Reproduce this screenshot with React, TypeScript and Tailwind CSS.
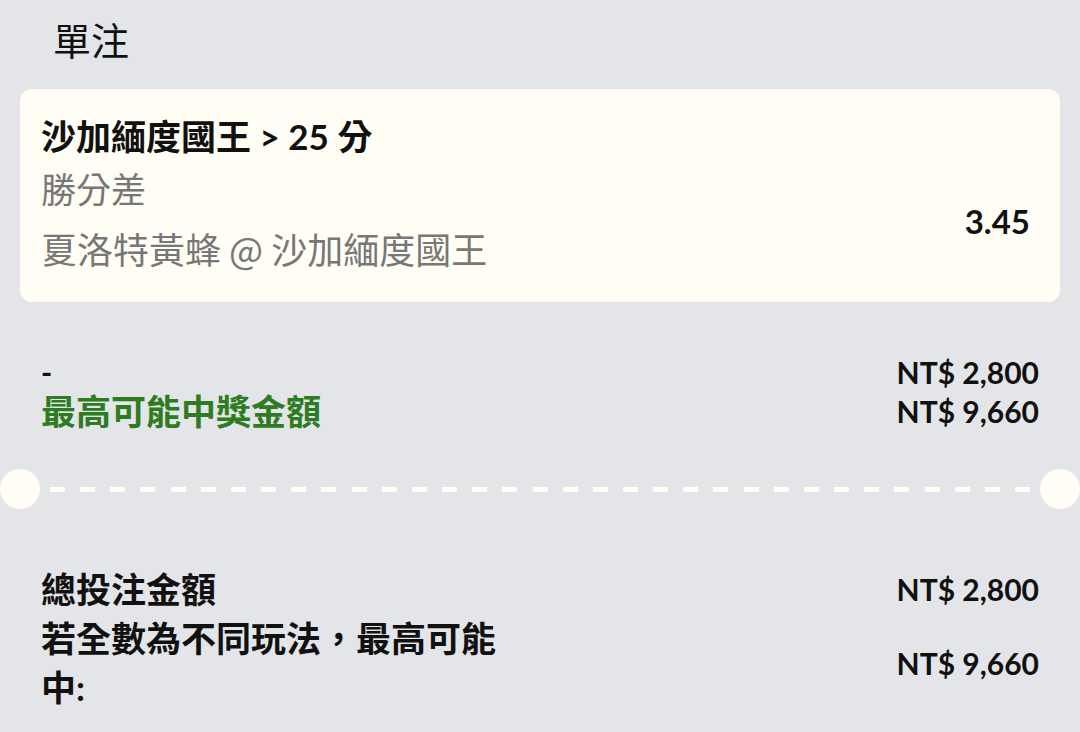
const dashes = Array.from({ length: 33 });

function Row({ left, right }: { left: React.ReactNode; right: React.ReactNode }) {
  return (
    <div className="flex items-center justify-between">
      {left}
      <span className="text-[30px] font-bold text-[#111]">{right}</span>
    </div>
  );
}

export default function App() {
  return (
    <div className="min-h-screen w-[1080px] bg-[#e4e5e8] font-[Lato,'Noto_Sans_CJK_TC',sans-serif] text-[#111]">
      {/* Header */}
      <div className="flex h-[89px] items-center pb-[9px] pl-[53px] text-[38px]">單注</div>

      {/* Selection card */}
      <div className="mx-[20px] flex items-start justify-between rounded-[12px] bg-[#fffdf4] pb-[24px] pl-[21px] pr-[30px] pt-[25px]">
        <div className="flex flex-col">
          <span className="text-[35px] font-bold leading-[44px]">沙加緬度國王 &gt; 25 分</span>
          <span className="font-['Noto_Sans_CJK_TC',sans-serif] text-[35px] leading-[60px] text-[#777]">勝分差</span>
          <span className="font-['Noto_Sans_CJK_TC',sans-serif] text-[36px] leading-[60px] text-[#777]">
            夏洛特黃蜂 @ 沙加緬度國王
          </span>
        </div>
        <span className="pt-[87px] text-[33px] font-bold leading-[40px]">3.45</span>
      </div>

      {/* Stake / potential win */}
      <div className="mt-[51px] px-[41px] leading-[39px]">
        <Row left={<span className="text-[30px] font-bold">-</span>} right="NT$ 2,800" />
        <Row
          left={<span className="text-[35px] font-bold text-[#2e7b22]">最高可能中獎金額</span>}
          right="NT$ 9,660"
        />
      </div>

      {/* Ticket divider */}
      <div className="mt-[38px] flex h-[40px] items-center">
        <div className="h-[40px] w-[40px] shrink-0 rounded-full bg-[#fffdf4]" />
        <div className="mx-[10px] flex flex-1 justify-between">
          {dashes.map((_, i) => (
            <div key={i} className="h-[5px] w-[15px] bg-[#fffdf4]" />
          ))}
        </div>
        <div className="h-[40px] w-[40px] shrink-0 rounded-full bg-[#fffdf4]" />
      </div>

      {/* Totals */}
      <div className="mt-[56px] px-[41px] leading-[49px]">
        <Row left={<span className="text-[35px] font-bold">總投注金額</span>} right="NT$ 2,800" />
        <Row
          left={<span className="w-[470px] text-[35px] font-bold">若全數為不同玩法，最高可能中:</span>}
          right="NT$ 9,660"
        />
      </div>
    </div>
  );
}
